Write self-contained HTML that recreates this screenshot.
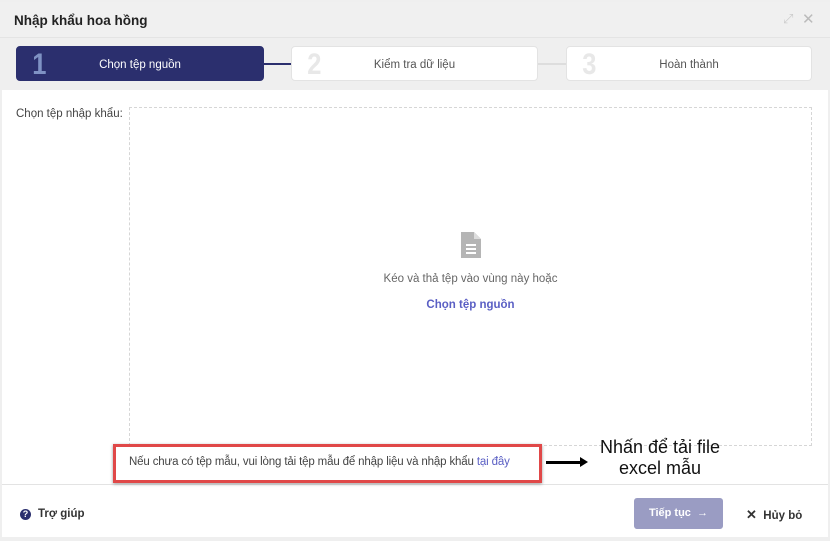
<!DOCTYPE html>
<html><head><meta charset="utf-8"><style>
*{margin:0;padding:0;box-sizing:border-box}
body{width:830px;height:541px;background:#efefef;font-family:"Liberation Sans",sans-serif;position:relative;overflow:hidden;font-size:11.5px;color:#333}
.a{position:absolute}
.step{position:absolute;top:46px;height:35px;border-radius:4px;background:#fff;border:1px solid #e3e3e3}
.step .n{position:absolute;left:14px;top:1px;font-size:30px;font-weight:bold;color:#e8e8e8;transform:scaleX(.85)}
.step .t{position:absolute;left:0;right:0;top:12px;text-align:center;color:#555;font-size:11.5px}
</style></head><body>
<div class="a" style="left:0;top:2px;width:830px;height:36px;background:#f0f0f0;border-bottom:1px solid #e4e4e4"></div>
<div class="a" style="left:14px;top:13px;font-size:13.5px;font-weight:bold;color:#222">Nhập khẩu hoa hồng</div>
<div class="a" style="left:783px;top:11px;color:#ccc;font-size:13px">⤢</div>
<div class="a" style="left:802px;top:10px;color:#bbb;font-size:15px">✕</div>
<div class="a" style="left:264px;top:63px;width:28px;height:2px;background:#2b2f6e"></div>
<div class="a" style="left:538px;top:63px;width:28px;height:2px;background:#ddd"></div>
<div class="step" style="left:16px;width:248px;background:#2b2f6e;border-color:#2b2f6e"><span class="n" style="color:#7f92c4">1</span><span class="t" style="color:#fff">Chọn tệp nguồn</span></div>
<div class="step" style="left:291px;width:247px"><span class="n">2</span><span class="t">Kiểm tra dữ liệu</span></div>
<div class="step" style="left:566px;width:246px"><span class="n">3</span><span class="t">Hoàn thành</span></div>
<div class="a" style="left:2px;top:90px;width:826px;height:447px;background:#fff"></div>
<div class="a" style="left:2px;top:484px;width:826px;height:1px;background:#e3e3e3"></div>
<div class="a" style="left:16px;top:108px;color:#444">Chọn tệp nhập khẩu:</div>
<div class="a" style="left:129px;top:107px;width:683px;height:339px;border:1px dashed #d6d6d6"></div>
<svg class="a" style="left:459px;top:232px" width="24" height="26" viewBox="0 0 24 26"><path d="M2 0h13l7 7v19H2z" fill="#b5b5b5"/><path d="M15 0v7h7z" fill="#ddd"/><rect x="7" y="12" width="10" height="2" fill="#fff"/><rect x="7" y="16" width="10" height="2" fill="#fff"/><rect x="7" y="20" width="10" height="2" fill="#fff"/></svg>
<div class="a" style="left:129px;width:683px;top:273px;text-align:center;color:#666">Kéo và thả tệp vào vùng này hoặc</div>
<div class="a" style="left:129px;width:683px;top:299px;text-align:center;color:#5a5fc4;font-weight:bold">Chọn tệp nguồn</div>
<div class="a" style="left:113px;top:444px;width:429px;height:39px;border:3px solid #e04848;background:#fff;box-shadow:0 1px 3px #999"></div>
<div class="a" style="left:129px;top:456px;color:#444;letter-spacing:-0.15px">Nếu chưa có tệp mẫu, vui lòng tải tệp mẫu để nhập liệu và nhập khẩu <span style="color:#5a5fc4">tại đây</span></div>
<div class="a" style="left:546px;top:461px;width:38px;height:3px;background:#000"></div>
<div class="a" style="left:580px;top:457px;width:0;height:0;border-left:8px solid #000;border-top:5px solid transparent;border-bottom:5px solid transparent"></div>
<div class="a" style="left:590px;top:437px;width:140px;text-align:center;font-size:18px;color:#111;line-height:21px">Nhấn để tải file<br>excel mẫu</div>
<div class="a" style="left:20px;top:509px;width:11px;height:11px;border-radius:50%;background:#2b2f6e;color:#fff;font-size:9px;font-weight:bold;text-align:center;line-height:11px">?</div>
<div class="a" style="left:38px;top:508px;font-weight:bold;color:#333">Trợ giúp</div>
<div class="a" style="left:634px;top:498px;width:89px;height:31px;background:#9a9cc3;border-radius:3px;color:#fff;font-weight:bold;font-size:11px;text-align:center;line-height:31px">Tiếp tục &nbsp;→</div>
<div class="a" style="left:746px;top:507px;font-weight:bold;color:#333"><span style="font-size:13px">✕</span> &nbsp;Hủy bỏ</div>
</body></html>
